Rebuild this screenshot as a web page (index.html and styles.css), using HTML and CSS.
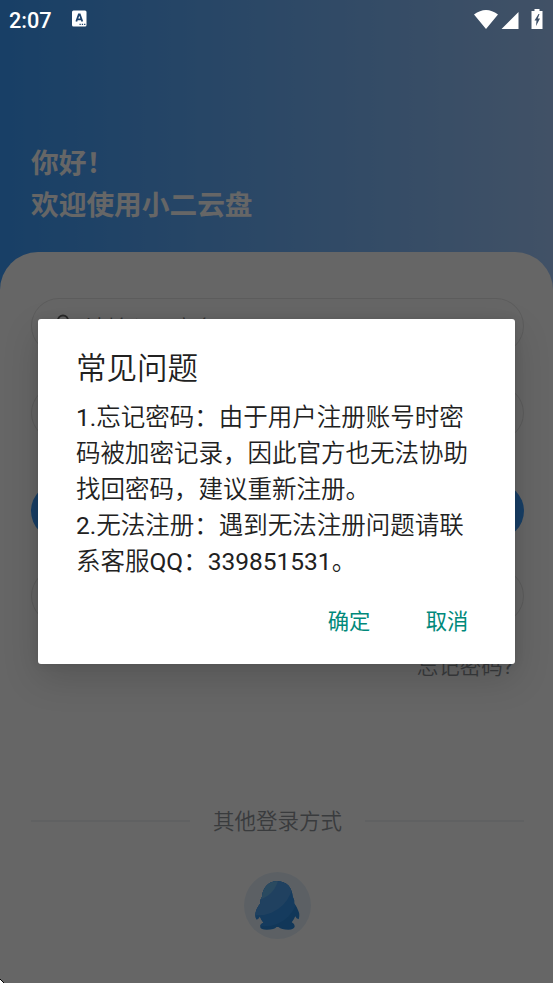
FILE: index.html
```
<!DOCTYPE html>
<html lang="zh-CN">
<head>
<meta charset="utf-8">
<title>小二云盘</title>
<link rel="stylesheet" href="styles.css">
</head>
<body>
<div class="screen">
  <header class="hero">
    <h1>你好！<br>欢迎使用小二云盘</h1>
  </header>
  <main class="sheet">
    <div class="field">
      <svg width="20" height="24" viewBox="0 0 20 24" fill="none" stroke="#666" stroke-width="2"><circle cx="10" cy="6.500" r="5"/><path d="M1 23c0-12 18-12 18 0z"/></svg>
      <span>请输入用户名</span>
    </div>
    <div class="field password"></div>
    <div class="field login"></div>
    <div class="field register"></div>
    <a class="forgot">忘记密码<span class="latin">?</span></a>
    <div class="divider"><span>其他登录方式</span></div>
    <div class="qq">
      <svg width="67" height="67" viewBox="0 0 68 68">
        <defs><clipPath id="bird"><path d="M33.500 9.500C24 9.500 19 17 18.300 25Q16 28 16.500 32Q11.500 38 11.500 44Q12 49 13.500 48Q15.500 47 16 45Q17.500 49 19.800 51.500Q16 53 16.500 56Q17 58.500 23 58.500Q31 58.500 33 55.800H35Q38 58.500 45 58.500Q51 58.500 51.500 55Q51.500 52.500 48.500 51Q51 48 52 45Q53 47.500 55.500 48Q57 43 55 39Q53.500 35 51 32Q51.500 28 49.500 25C48.500 16 44 9.500 33.500 9.500Z"/></clipPath></defs>
        <circle cx="34" cy="34" r="34" fill="#e6f1fb"/>
        <g clip-path="url(#bird)">
          <path fill="#2b8ade" d="M0 0h68v68H0z"/>
          <circle cx="21" cy="21" r="34" fill="#3594ea"/>
          <circle cx="14" cy="8" r="36" fill="#52a3ef"/>
          <circle cx="9" cy="3" r="26" fill="#6ab8f1"/>
        </g>
      </svg>
    </div>
  </main>
</div>
<div class="overlay">
  <div class="status">
    <span class="time">2:07</span>
    <svg class="app" width="15" height="17" viewBox="0 0 15 17"><rect y=".5" width="14.500" height="16" rx="1.500" fill="#fff"/><path d="M4.300 11.500 6.800 4.500h1l2.500 7M5 9.300h4.700" fill="none" stroke="#1d426b" stroke-width="1.800"/><path d="M7.500 14.300h1.300m1 0h1.300m1 0h1.300" stroke="#1d426b" stroke-width="1.200"/></svg>
    <svg class="signals" width="70" height="22" viewBox="0 0 70 22" fill="#fff"><path d="M0 5.500Q12 -3.500 24 5.500L12 20ZM27.500 20 44.500 3V20ZM57.500 2h3V0h5v2h3v18h-11Z"/><path d="M64.500 5 60.500 11.500h2l-.5 5.500 4-7.500h-2.200L65.500 5Z" fill="#3d5068"/></svg>
  </div>
  <section class="dialog" role="dialog">
    <h2>常见问题</h2>
    <p><span class="latin">1.</span>忘记密码：由于用户注册账号时密<br>码被加密记录，因此官方也无法协助<br>找回密码，建议重新注册。<br><span class="latin">2.</span>无法注册：遇到无法注册问题请联<br>系客服<span class="latin">QQ</span>：<span class="latin">339851531</span>。</p>
    <div class="actions"><button>确定</button><button>取消</button></div>
  </section>
  <svg class="corner" width="4" height="4"><path d="M0 0v4h4z" fill="#fff"/><path d="M0 0 4 4" stroke="#000"/></svg>
</div>
</body>
</html>
```
FILE: styles.css
```
* { box-sizing: border-box; }

body {
  margin: 0;
  font-family: Roboto, "Noto Sans CJK SC", sans-serif;
}

.latin { font-weight: 400; }

.screen {
  height: 983px;
  overflow: hidden;
  background: linear-gradient(90deg, #3c9eff, #a3cbff);
}

.hero {
  height: 252px;
  padding: 143px 31px 0;
}

h1 {
  margin: 0;
  font-size: 27.700px;
  line-height: 42px;
  font-weight: 700;
  color: #fff;
}

.sheet {
  height: 731px;
  padding: 46px 29px 0 31px;
  display: flex;
  flex-direction: column;
  background: #fff;
  border-radius: 38px 38px 0 0;
}

.field {
  flex: none;
  height: 56px;
  padding-left: 21px;
  display: flex;
  align-items: center;
  gap: 12px;
  border: 1px solid #e5e5e5;
  border-radius: 28px;
  font-size: 22px;
  font-weight: 350;
  color: #808080;
}

.password { margin-top: 31px; }
.login { margin-top: 42px; border: 0; background: #3c9eff; }
.register { margin-top: 29px; }

.forgot {
  align-self: flex-end;
  margin: 27px 11px 0 0;
  font-size: 21.500px;
  font-weight: 350;
  line-height: 32px;
  color: #909399;
}

.divider {
  margin-top: 122px;
  display: flex;
  align-items: center;
  gap: 23px;
  font-size: 21.500px;
  font-weight: 350;
  line-height: 34px;
  color: #909399;
}

.divider::before, .divider::after {
  content: "";
  flex: 1;
  height: 2px;
  margin-top: -2px;
  background: #f0f2f4;
}

.qq {
  margin-top: 33px;
  display: flex;
  justify-content: center;
}

.overlay {
  position: absolute;
  inset: 0;
  height: 983px;
  overflow: hidden;
  background: rgba(0, 0, 0, .6);
}

.status {
  height: 38px;
  padding: 0 9px;
  display: flex;
  align-items: center;
}

.time {
  width: 63px;
  padding-top: 2px;
  font-size: 21.700px;
  font-weight: 500;
  color: #fff;
}

.app { margin-top: -1px; }

.signals { margin: 1px 0 0 auto; }

.dialog {
  width: 477px;
  height: 345px;
  margin: 281px 0 0 38px;
  padding: 27px 25px 0 38px;
  background: #fff;
  border-radius: 3px;
  box-shadow: 0 14px 36px rgba(0, 0, 0, .16), 0 0 10px rgba(0, 0, 0, .1);
  color: #212121;
}

h2 {
  margin: 0;
  font-size: 30.500px;
  line-height: 45px;
  font-weight: 350;
}

p {
  margin: 9px 0 0;
  font-size: 24.500px;
  font-weight: 350;
  line-height: 36px;
  white-space: nowrap;
}

.actions {
  margin-top: 20px;
  display: flex;
  justify-content: flex-end;
  gap: 12px;
}

.actions button {
  width: 86px;
  height: 44px;
  padding: 0;
  border: 0;
  background: none;
  font: 400 21.300px/44px Roboto, "Noto Sans CJK SC", sans-serif;
  color: #00897b;
}

.corner {
  position: absolute;
  left: 0;
  bottom: 0;
}
```
